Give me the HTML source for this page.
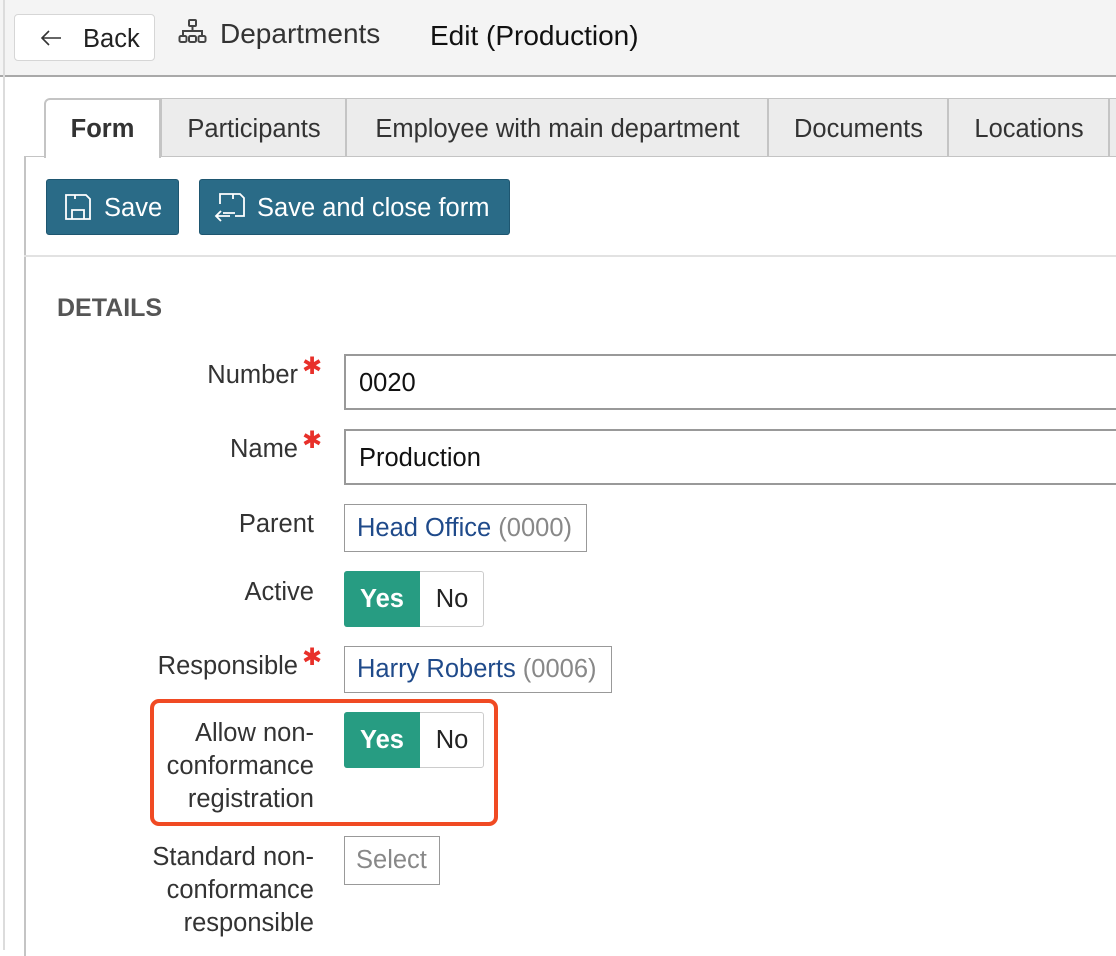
<!DOCTYPE html>
<html><head><meta charset="utf-8"><style>
*{box-sizing:border-box;margin:0;padding:0}
body{width:1116px;height:950px;overflow:hidden;background:#fff;font-family:"Liberation Sans",Arial,sans-serif;position:relative;color:#333}
.a{position:absolute}
.hdr{left:0;top:0;width:1116px;height:77px;background:#f4f4f4;border-bottom:2px solid #a9a9a9}
.lb{left:3px;top:0;width:2px;height:950px;background:#dcdcdc}
.back{left:14px;top:14px;width:141px;height:47px;background:#fff;border:1px solid #d6d6d6;border-radius:4px;font-size:25.5px;line-height:47px;color:#222}
.tab{top:98px;height:59px;background:#ececec;border-top:1px solid #c4c4c4;border-bottom:1px solid #c4c4c4;border-left:2px solid #c4c4c4;font-size:25.5px;line-height:60px;text-align:center;color:#333}
.btn{top:179px;height:56px;background:#2a6b87;border:1px solid #1e5670;border-radius:3px;color:#fff;font-size:25.5px;line-height:56px}
.lbl{font-size:25.5px;color:#333;text-align:right;line-height:33px}
.req{color:#e8302a;font-size:24px;font-family:"DejaVu Sans",sans-serif}
.inp{left:344px;border:2px solid #999;background:#fff;font-size:25.5px;color:#111;padding-left:13px}
.tg{left:344px;width:140px;height:56px;border:1px solid #ccc;border-radius:3px;background:#fff;font-size:25.5px}
.tg .y{position:absolute;left:-1px;top:-1px;width:76px;height:56px;background:#279c82;color:#fff;font-weight:bold;text-align:center;line-height:56px;border-radius:3px 0 0 3px}
.tg .n{position:absolute;left:75px;top:0;width:64px;text-align:center;line-height:54px;color:#222}
</style></head><body>
<div class="a hdr"></div>
<div class="a lb"></div>
<div class="a back"><svg class="a" style="left:24px;top:13px" width="24" height="20" viewBox="0 0 24 20"><path d="M22 10H3M10 3L3 10l7 7" fill="none" stroke="#333" stroke-width="1.6"/></svg><span class="a" style="left:68px;top:1px">Back</span></div>
<svg class="a" style="left:178px;top:18px" width="30" height="28" viewBox="0 0 30 28"><g fill="none" stroke="#444" stroke-width="2"><rect x="11" y="2" width="7" height="6" rx="1"/><path d="M14.5 8v5M5 17v-4h19v4"/><rect x="1.5" y="18" width="7" height="6" rx="1.5"/><rect x="11" y="18" width="7" height="6" rx="1.5"/><rect x="20.5" y="18" width="7" height="6" rx="1.5"/></g></svg>
<div class="a" style="left:220px;top:18px;font-size:28px;color:#333">Departments</div>
<div class="a" style="left:430px;top:20px;font-size:28px;color:#111">Edit (Production)</div>

<div class="a" style="left:24px;top:156px;width:1092px;height:1px;background:#c4c4c4"></div>
<div class="a" style="left:24px;top:156px;width:2px;height:800px;background:#c4c4c4"></div>
<div class="a tab" style="left:160px;width:186px">Participants</div>
<div class="a tab" style="left:345px;width:423px">Employee with main department</div>
<div class="a tab" style="left:767px;width:181px">Documents</div>
<div class="a tab" style="left:947px;width:162px">Locations</div>
<div class="a tab" style="left:1108px;width:40px"></div>
<div class="a tab" style="left:44px;width:117px;background:#fff;border:2px solid #c4c4c4;border-bottom:none;height:60px;border-radius:6px 0 0 0;font-weight:bold;line-height:58px">Form</div>

<div class="a btn" style="left:46px;width:133px"><svg class="a" style="left:17px;top:14px" width="28" height="26" viewBox="0 0 28 26"><g fill="none" stroke="#fff" stroke-width="1.8"><path d="M2 1h20l4 4v20H2z"/><path d="M8 25v-9h12v9M11 1v4"/></g></svg><span class="a" style="left:57px;top:0">Save</span></div>
<div class="a btn" style="left:199px;width:311px"><svg class="a" style="left:14px;top:12px" width="32" height="30" viewBox="0 0 32 30"><g fill="none" stroke="#fff" stroke-width="1.8"><path d="M6 12V2h20l4 4v18h-9M19 2v5M9 21h12"/><path d="M2 24h14M7 19l-5 5 5 5"/></g></svg><span class="a" style="left:57px;top:0">Save and close form</span></div>
<div class="a" style="left:24px;top:255px;width:1092px;height:2px;background:#e2e2e2"></div>

<div class="a" style="left:57px;top:294px;font-size:25px;font-weight:bold;color:#555">DETAILS</div>

<div class="a lbl" style="left:60px;top:359px;width:238px">Number</div><div class="a req" style="left:302px;top:352px">✱</div>
<div class="a inp" style="top:354px;width:800px;height:56px;line-height:54px">0020</div>
<div class="a lbl" style="left:60px;top:433px;width:238px">Name</div><div class="a req" style="left:302px;top:426px">✱</div>
<div class="a inp" style="top:429px;width:800px;height:56px;line-height:54px">Production</div>
<div class="a lbl" style="left:60px;top:508px;width:254px">Parent</div>
<div class="a inp" style="top:504px;width:243px;height:48px;line-height:46px;border-width:1.5px;padding-left:12px"><span style="color:#1f4a8a">Head Office</span> <span style="color:#888">(0000)</span></div>
<div class="a lbl" style="left:60px;top:576px;width:254px">Active</div>
<div class="a tg" style="top:571px"><div class="y">Yes</div><div class="n">No</div></div>
<div class="a lbl" style="left:60px;top:650px;width:238px">Responsible</div><div class="a req" style="left:302px;top:643px">✱</div>
<div class="a inp" style="top:646px;width:268px;height:47px;line-height:45px;border-width:1.5px;padding-left:12px"><span style="color:#1f4a8a">Harry Roberts</span> <span style="color:#888">(0006)</span></div>
<div class="a" style="left:150px;top:699px;width:348px;height:127px;border:4px solid #f04a23;border-radius:9px"></div>
<div class="a lbl" style="left:60px;top:717px;width:254px">Allow non-<br>conformance<br>registration</div>
<div class="a tg" style="top:712px"><div class="y">Yes</div><div class="n">No</div></div>
<div class="a lbl" style="left:60px;top:841px;width:254px">Standard non-<br>conformance<br>responsible</div>
<div class="a inp" style="top:836px;width:96px;height:49px;line-height:47px;border-width:1.5px;padding-left:11px;color:#888">Select</div>
</body></html>
